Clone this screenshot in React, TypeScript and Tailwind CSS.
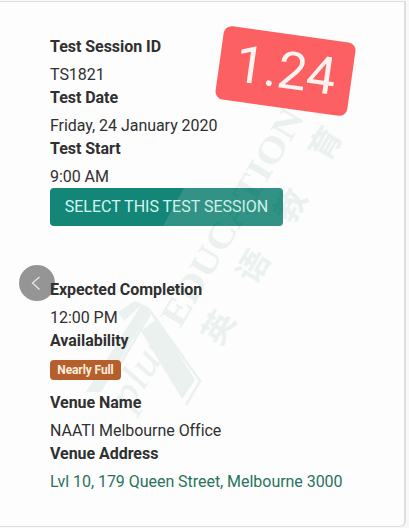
import React from "react";

const WATERMARK_CHARS = [
  { char: "英", x: 216, y: 326 },
  { char: "语", x: 251, y: 265 },
  { char: "教", x: 288, y: 204 },
  { char: "育", x: 323, y: 142 },
];

const Label = ({ children }: { children: React.ReactNode }) => (
  <dt className="font-bold leading-[23px]">{children}</dt>
);

const Value = ({ children }: { children: React.ReactNode }) => (
  <dd className="pt-[5px] leading-[23px]">{children}</dd>
);

const Watermark = () => (
  <svg
    className="absolute inset-0 pointer-events-none"
    width="409"
    height="528"
    viewBox="0 0 409 528"
    fill="#8fb8ae"
    opacity="0.17"
  >
    {/* Light band across the button */}
    <path d="M163 226 L184 188 H279 Q283 188 283 192 V222 Q283 226 279 226 Z" fill="#c9cfcc" />
    <path d="M86 392 L142 304 L151 309 L101 392 Z" />
    <path d="M118 312 L135 301 L142 304 L124 321 Z" />
    <path d="M141 331 L157 319 L195 380 L182 399 Z" />
    <path
      d="M112 378 L151 312 L200 381 L186 405"
      fill="none"
      stroke="#8fb8ae"
      strokeWidth="2.5"
    />
    <text
      transform="translate(180 329) rotate(-59.5)"
      fontFamily="Liberation Serif, serif"
      fontWeight="bold"
      fontSize="36"
      textLength="246"
      lengthAdjust="spacingAndGlyphs"
    >
      EDUCATION
    </text>
    <text
      transform="translate(131 412) rotate(-59.5)"
      fontFamily="Liberation Serif, serif"
      fontStyle="italic"
      fontSize="42"
      textLength="80"
      lengthAdjust="spacingAndGlyphs"
    >
      plus
    </text>
    {WATERMARK_CHARS.map(({ char, x, y }) => (
      <text
        key={char}
        transform={`translate(${x} ${y}) rotate(-59.5)`}
        textAnchor="middle"
        dominantBaseline="central"
        fontFamily="Noto Sans CJK SC, sans-serif"
        fontWeight="bold"
        fontSize="32"
      >
        {char}
      </text>
    ))}
  </svg>
);

const App: React.FC = () => {
  return (
    <div className="relative w-[409px] h-[528px] overflow-hidden bg-[#f8f8f8] pt-px font-['Roboto',sans-serif] text-base tracking-[-0.04px] text-[#303030]">
      <div className="w-[406px] h-[526px] bg-[#fdfdfd] border-t border-r-2 border-b border-[#dedede] rounded-br-md pl-[50px] pt-[33px]">
        <dl>
          <Label>Test Session ID</Label>
          <Value>TS1821</Value>
          <Label>Test Date</Label>
          <Value>Friday, 24 January 2020</Value>
          <Label>Test Start</Label>
          <Value>9:00 AM</Value>
        </dl>
        <button className="block w-[233px] h-[38px] rounded bg-[#138678] text-[#d4f7f0] tracking-normal whitespace-nowrap">
          SELECT THIS TEST SESSION
        </button>
        <dl className="relative z-10 mt-[52px]">
          <Label>Expected Completion</Label>
          <Value>12:00 PM</Value>
          <Label>Availability</Label>
          <dd className="mt-2 mb-[11px] flex w-[71px] h-5 items-center justify-center rounded-sm bg-[#b55f2c] text-xs font-bold tracking-[-0.1px] text-[#fdeedd] whitespace-nowrap">
            Nearly Full
          </dd>
          <Label>Venue Name</Label>
          <Value>NAATI Melbourne Office</Value>
          <Label>Venue Address</Label>
          <Value>
            <a className="text-[#28735c]">Lvl 10, 179 Queen Street, Melbourne 3000</a>
          </Value>
        </dl>
      </div>

      <Watermark />

      {/* Previous slide */}
      <button className="absolute left-[19px] top-[265px] size-9 rounded-full bg-[#959595] flex items-center justify-center">
        <svg width="36" height="36" viewBox="0 0 36 36" fill="none" stroke="#e8e8e8" strokeWidth="1.3">
          <path d="M20.5 12 L13.5 18 L20.5 24.5" />
        </svg>
      </button>

      {/* Date sticker */}
      <div className="absolute left-[219px] top-[34px] w-[133px] h-[74px] rotate-[8deg] rounded-lg bg-[#fd6062] flex items-center justify-center text-[52px] text-[#fff3f0]">
        1.24
      </div>
    </div>
  );
};

export default App;
